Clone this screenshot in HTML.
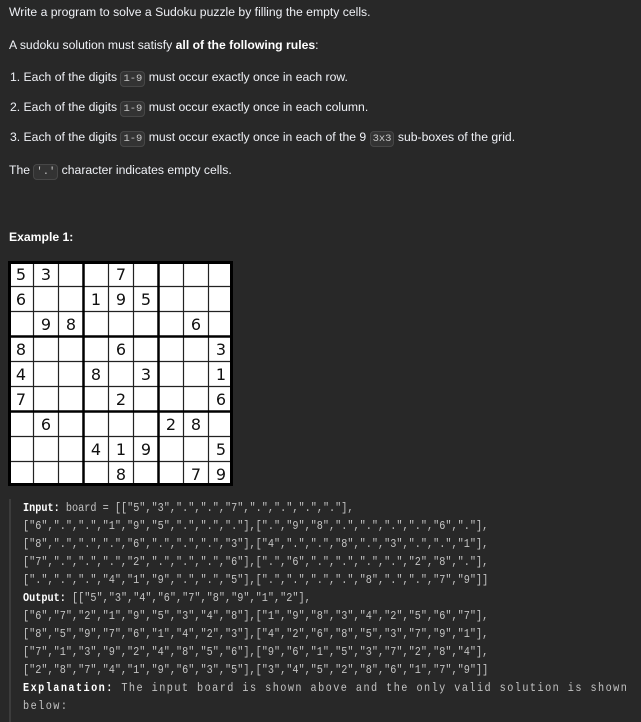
<!DOCTYPE html>
<html><head><meta charset="utf-8"><style>
html,body{margin:0;padding:0;background:#282828;width:641px;height:722px;overflow:hidden}
body{font-family:"Liberation Sans",sans-serif;color:#eff1f6;font-size:12.2px;position:relative}
.t{position:absolute;left:9px;white-space:nowrap;line-height:16px}
code{font-family:"Liberation Mono",monospace;font-size:10.5px;color:#c8c8c8;background:#333;border:1px solid #474747;border-radius:4px;padding:1px 2px}
b{font-weight:bold;color:#fff}
.bar{position:absolute;left:9px;top:499px;width:2px;height:223px;background:#3c3c3c}
pre{position:absolute;left:23px;top:499px;margin:0;font-family:"Liberation Mono",monospace;font-size:12px;line-height:18px;color:#c4c4c4;white-space:pre;transform:scaleX(0.85);transform-origin:0 0}
pre b{color:#fff}
.w{letter-spacing:1.7px}
</style></head><body>
<div class="t" style="top:4px">Write a program to solve a Sudoku puzzle by filling the empty cells.</div>
<div class="t" style="top:37px">A sudoku solution must satisfy <b>all of the following rules</b>:</div>
<div class="t" style="top:69px;left:10px">1. Each of the digits <code>1-9</code> must occur exactly once in each row.</div>
<div class="t" style="top:99px;left:10px">2. Each of the digits <code>1-9</code> must occur exactly once in each column.</div>
<div class="t" style="top:129px;left:10px">3. Each of the digits <code>1-9</code> must occur exactly once in each of the 9 <code>3x3</code> sub-boxes of the grid.</div>
<div class="t" style="top:162px">The <code>'.'</code> character indicates empty cells.</div>
<div class="t" style="top:229px"><b>Example 1:</b></div>
<svg style="position:absolute;left:8px;top:261px" width="225" height="225" viewBox="0 0 225 225">
<rect x="0" y="0" width="225" height="225" fill="#fff"/>
<g stroke="#222" stroke-width="1.2">
<line x1="25.5" y1="0" x2="25.5" y2="225"/><line x1="50.5" y1="0" x2="50.5" y2="225"/>
<line x1="100.5" y1="0" x2="100.5" y2="225"/><line x1="125.5" y1="0" x2="125.5" y2="225"/>
<line x1="175.5" y1="0" x2="175.5" y2="225"/><line x1="200.5" y1="0" x2="200.5" y2="225"/>
<line y1="25.5" x1="0" y2="25.5" x2="225"/><line y1="50.5" x1="0" y2="50.5" x2="225"/>
<line y1="100.5" x1="0" y2="100.5" x2="225"/><line y1="125.5" x1="0" y2="125.5" x2="225"/>
<line y1="175.5" x1="0" y2="175.5" x2="225"/><line y1="200.5" x1="0" y2="200.5" x2="225"/>
</g>
<g stroke="#000" stroke-width="2.5">
<line x1="75.5" y1="0" x2="75.5" y2="225"/><line x1="150.5" y1="0" x2="150.5" y2="225"/>
<line y1="75.5" x1="0" y2="75.5" x2="225"/><line y1="150.5" x1="0" y2="150.5" x2="225"/>
<rect x="1.5" y="1.5" width="222" height="222" fill="none" stroke-width="3"/>
</g>
<g font-family="DejaVu Sans,sans-serif" font-size="16" fill="#111" text-anchor="middle">
<text x="13" y="19">5</text><text x="38" y="19">3</text><text x="113" y="19">7</text>
<text x="13" y="44">6</text><text x="88" y="44">1</text><text x="113" y="44">9</text><text x="138" y="44">5</text>
<text x="38" y="69">9</text><text x="63" y="69">8</text><text x="188" y="69">6</text>
<text x="13" y="94">8</text><text x="113" y="94">6</text><text x="213" y="94">3</text>
<text x="13" y="119">4</text><text x="88" y="119">8</text><text x="138" y="119">3</text><text x="213" y="119">1</text>
<text x="13" y="144">7</text><text x="113" y="144">2</text><text x="213" y="144">6</text>
<text x="38" y="169">6</text><text x="163" y="169">2</text><text x="188" y="169">8</text>
<text x="88" y="194">4</text><text x="113" y="194">1</text><text x="138" y="194">9</text><text x="213" y="194">5</text>
<text x="113" y="219">8</text><text x="188" y="219">7</text><text x="213" y="219">9</text>
</g>
</svg>
<div class="bar"></div>
<pre><b>Input:</b> board = [["5","3",".",".","7",".",".",".","."],
["6",".",".","1","9","5",".",".","."],[".","9","8",".",".",".",".","6","."],
["8",".",".",".","6",".",".",".","3"],["4",".",".","8",".","3",".",".","1"],
["7",".",".",".","2",".",".",".","6"],[".","6",".",".",".",".","2","8","."],
[".",".",".","4","1","9",".",".","5"],[".",".",".",".","8",".",".","7","9"]]
<b>Output:</b> [["5","3","4","6","7","8","9","1","2"],
["6","7","2","1","9","5","3","4","8"],["1","9","8","3","4","2","5","6","7"],
["8","5","9","7","6","1","4","2","3"],["4","2","6","8","5","3","7","9","1"],
["7","1","3","9","2","4","8","5","6"],["9","6","1","5","3","7","2","8","4"],
["2","8","7","4","1","9","6","3","5"],["3","4","5","2","8","6","1","7","9"]]
<span class="w"><b>Explanation:</b> The input board is shown above and the only valid solution is shown
below:</span>
</pre>
</body></html>
